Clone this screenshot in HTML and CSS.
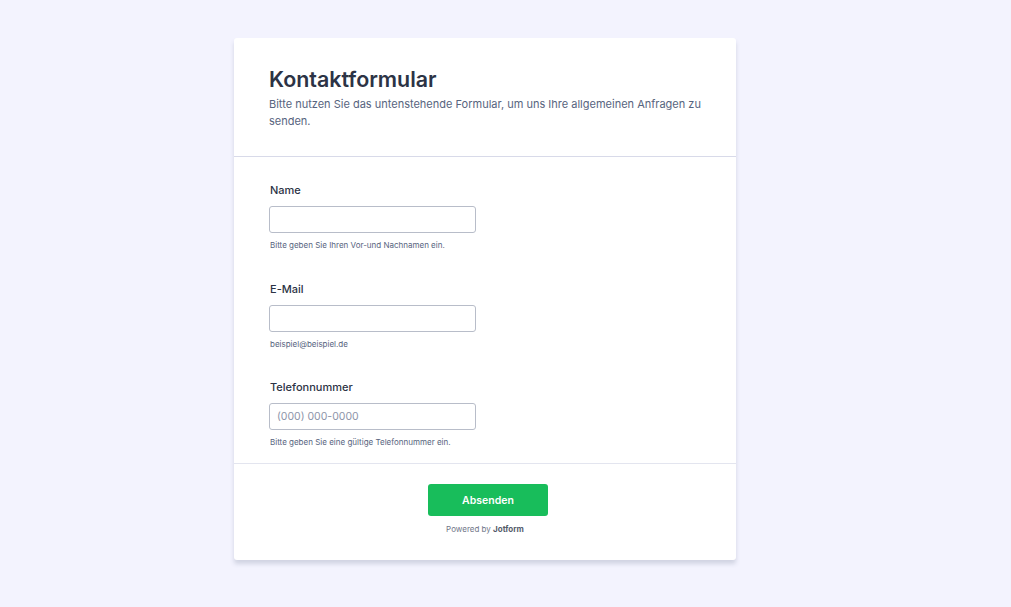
FILE: index.html
```html
<!DOCTYPE html>
<html lang="de">
<head>
<meta charset="utf-8">
<title>Kontaktformular</title>
<link rel="stylesheet" href="styles.css">
</head>
<body>
<div class="card">
  <header class="head">
    <h1 class="title">Kontaktformular</h1>
    <p class="subtitle">Bitte nutzen Sie das untenstehende Formular, um uns Ihre allgemeinen Anfragen zu senden.</p>
  </header>
  <div class="fields">
    <div class="field">
      <label class="label">Name</label>
      <input class="input" type="text">
      <div class="help">Bitte geben Sie Ihren Vor-und Nachnamen ein.</div>
    </div>
    <div class="field">
      <label class="label">E-Mail</label>
      <input class="input" type="text">
      <div class="help">beispiel@beispiel.de</div>
    </div>
    <div class="field">
      <label class="label">Telefonnummer</label>
      <input class="input" type="text" placeholder="(000) 000-0000">
      <div class="help">Bitte geben Sie eine gültige Telefonnummer ein.</div>
    </div>
  </div>
  <footer class="foot">
    <button class="submit" type="button">Absenden</button>
    <div class="powered">Powered by <b>Jotform</b></div>
  </footer>
</div>
</body>
</html>
```
FILE: styles.css
```css
* { box-sizing: border-box; }
body {
  margin: 0;
  background: #f3f3fe;
  font-family: Inter, "Noto Sans", sans-serif;
  color: #2c3345;
  padding-top: 38px;
  min-height: 607px;
}
.card {
  width: 502px;
  margin-left: 234px;
  background: #fff;
  border-radius: 3px;
  box-shadow: 0 4px 4px rgba(87, 100, 126, 0.21);
}
.head {
  padding: 27px 35px 26px;
  border-bottom: 1px solid #d8dae9;
}
.title {
  margin: 0;
  font-size: 21.4px;
  line-height: 28px;
  font-weight: 600;
  color: #2c3345;
}
.subtitle {
  margin: 3px 0 0;
  font-size: 11px;
  line-height: 17px;
  color: #57647e;
}
.fields {
  padding: 25px 35px 11px;
  border-bottom: 1px solid #e3e5ef;
}
.field {
  display: flex;
  flex-direction: column;
  align-items: flex-start;
  height: 98px;
}
.field:first-child { height: 99px; }
.field:last-child { height: 73px; }
.label {
  font-size: 11px;
  line-height: 16px;
  font-weight: 500;
  color: #2c3345;
  margin-left: 1px;
  margin-bottom: 8px;
}
.input {
  width: 207px;
  height: 27px;
  border: 1px solid #b8bdc9;
  border-radius: 3px;
  background: #fff;
  padding: 0 7px;
  font-family: Inter, "Noto Sans", sans-serif;
  font-size: 10.5px;
  color: #2c3345;
  margin: 0;
}
.input::placeholder { color: #8d94a9; }
.help {
  font-size: 8px;
  line-height: 12px;
  color: #57647e;
  margin-top: 6px;
  margin-left: 1px;
}
.foot {
  padding: 20px 0 25px;
  display: flex;
  flex-direction: column;
  align-items: center;
}
.submit {
  width: 120px;
  height: 32px;
  margin-left: 6px;
  border: 0;
  border-radius: 3px;
  background: #18bd5b;
  color: #fff;
  font-family: Inter, "Noto Sans", sans-serif;
  font-size: 10.5px;
  font-weight: 600;
}
.powered {
  margin-top: 7px;
  font-size: 8px;
  line-height: 12px;
  color: #6f7688;
}
.powered b { color: #555b6b; font-weight: 700; }
```
